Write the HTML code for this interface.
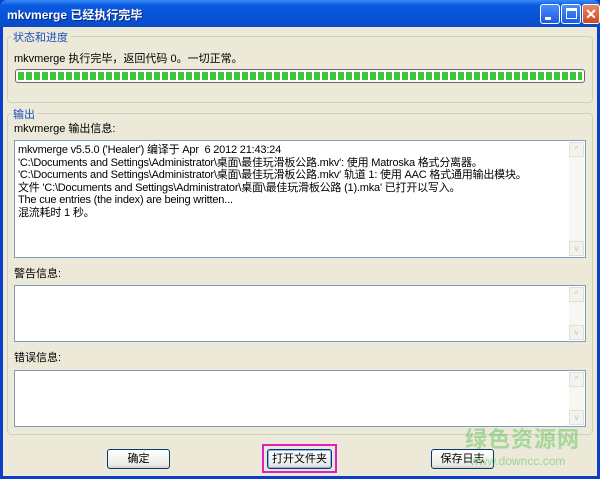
<!DOCTYPE html>
<html><head><meta charset="utf-8"><style>
*{margin:0;padding:0;box-sizing:border-box}
html,body{width:600px;height:479px;overflow:hidden}
body{font-family:"Liberation Sans","Noto Sans CJK SC",sans-serif;font-size:11px;color:#000;background:#0a3fc6;position:relative}
.a{position:absolute;white-space:nowrap}
.title{left:0;top:0;width:600px;height:27px;background:linear-gradient(#3a8cf8 0,#0a5ae0 20%,#0853d8 60%,#0a4ac6 100%);border-radius:7px 7px 0 0}
.ttext{left:7px;top:6px;color:#fff;font-weight:bold;font-size:12px;text-shadow:1px 1px #0a2a80}
.tb{top:4px;width:20px;height:20px;border:1px solid #fff;border-radius:3px;background:linear-gradient(#4a8ef8,#1a5ae8)}
.client{left:3px;top:27px;width:594px;height:449px;background:#ece9d8}
.grp{border:1px solid #d0d0bf;border-radius:4px}
.gl{color:#1a4ec0;background:#ece9d8;padding:0 2px}
.box{background:#fff;border:1px solid #7f9db9}
.sb{right:1px;top:1px;bottom:1px;width:15px;background:#f6f6f2}
.ar{width:15px;height:15px;background:#f3f3ee;border:1px solid #e0e0d8;color:#c0c0b8;font-size:8px;text-align:center;line-height:13px}
.btn{height:20px;border:1px solid #003c74;border-radius:3px;background:linear-gradient(#fff,#ecebe6 80%,#d6d0c5);text-align:center;line-height:18px;font-size:11px}
</style></head><body>
<div class="a title"></div>
<div class="a ttext">mkvmerge 已经执行完毕</div>
<div class="a tb" style="left:540px"><div class="a" style="left:4px;top:12px;width:6px;height:3px;background:#fff"></div></div>
<div class="a tb" style="left:561px"><div class="a" style="left:4px;top:3px;width:11px;height:11px;border:1px solid #fff;border-top-width:3px"></div></div>
<div class="a tb" style="left:582px;width:18px;background:linear-gradient(#e88a6a,#d0461e);color:#fff;font-weight:bold;font-size:14px;text-align:center;line-height:18px">✕</div>
<div class="a client"></div>
<div class="a grp" style="left:7px;top:36px;width:586px;height:67px"></div>
<div class="a gl" style="left:11px;top:29px">状态和进度</div>
<div class="a" style="left:14px;top:50px">mkvmerge 执行完毕，返回代码 0。一切正常。</div>
<div class="a" style="left:15px;top:69px;width:570px;height:14px;border:1px solid #686868;border-radius:3px;background:#fff;padding:2px 2px">
<div style="height:8px;background:repeating-linear-gradient(90deg,#3cc63c 0,#3cc63c 6px,#fff 6px,#fff 8px)"></div></div>
<div class="a grp" style="left:7px;top:113px;width:586px;height:322px"></div>
<div class="a gl" style="left:11px;top:106px">输出</div>
<div class="a" style="left:14px;top:120px">mkvmerge 输出信息:</div>
<div class="a box" style="left:14px;top:140px;width:572px;height:118px">
<div style="padding:3px 3px;line-height:12.5px;font-size:11px;letter-spacing:-0.2px;white-space:nowrap">mkvmerge v5.5.0 ('Healer') 编译于 Apr &nbsp;6 2012 21:43:24<br>'C:\Documents and Settings\Administrator\桌面\最佳玩滑板公路.mkv': 使用 Matroska 格式分离器。<br>'C:\Documents and Settings\Administrator\桌面\最佳玩滑板公路.mkv' 轨道 1: 使用 AAC 格式通用输出模块。<br>文件 'C:\Documents and Settings\Administrator\桌面\最佳玩滑板公路 (1).mka' 已打开以写入。<br>The cue entries (the index) are being written...<br>混流耗时 1 秒。</div>
<div class="a sb"><div class="a ar" style="top:0">^</div><div class="a ar" style="bottom:0">v</div></div></div>
<div class="a" style="left:14px;top:265px">警告信息:</div>
<div class="a box" style="left:14px;top:285px;width:572px;height:57px"><div class="a sb"><div class="a ar" style="top:0">^</div><div class="a ar" style="bottom:0">v</div></div></div>
<div class="a" style="left:14px;top:349px">错误信息:</div>
<div class="a box" style="left:14px;top:370px;width:572px;height:57px"><div class="a sb"><div class="a ar" style="top:0">^</div><div class="a ar" style="bottom:0">v</div></div></div>
<div class="a btn" style="left:107px;top:449px;width:63px">确定</div>
<div class="a" style="left:262px;top:444px;width:75px;height:29px;border:2px solid #e020c0"></div>
<div class="a btn" style="left:267px;top:449px;width:65px;box-shadow:inset 0 0 0 1px #8cb4f0">打开文件夹</div>
<div class="a btn" style="left:431px;top:449px;width:63px">保存日志</div>
<div class="a" style="left:465px;top:428px;font-size:22px;line-height:24px;font-weight:bold;color:rgba(80,190,80,0.45);letter-spacing:1px">绿色资源网</div>
<div class="a" style="left:470px;top:454px;font-size:12px;line-height:14px;color:rgba(80,190,80,0.5)">www.downcc.com</div>
</body></html>
